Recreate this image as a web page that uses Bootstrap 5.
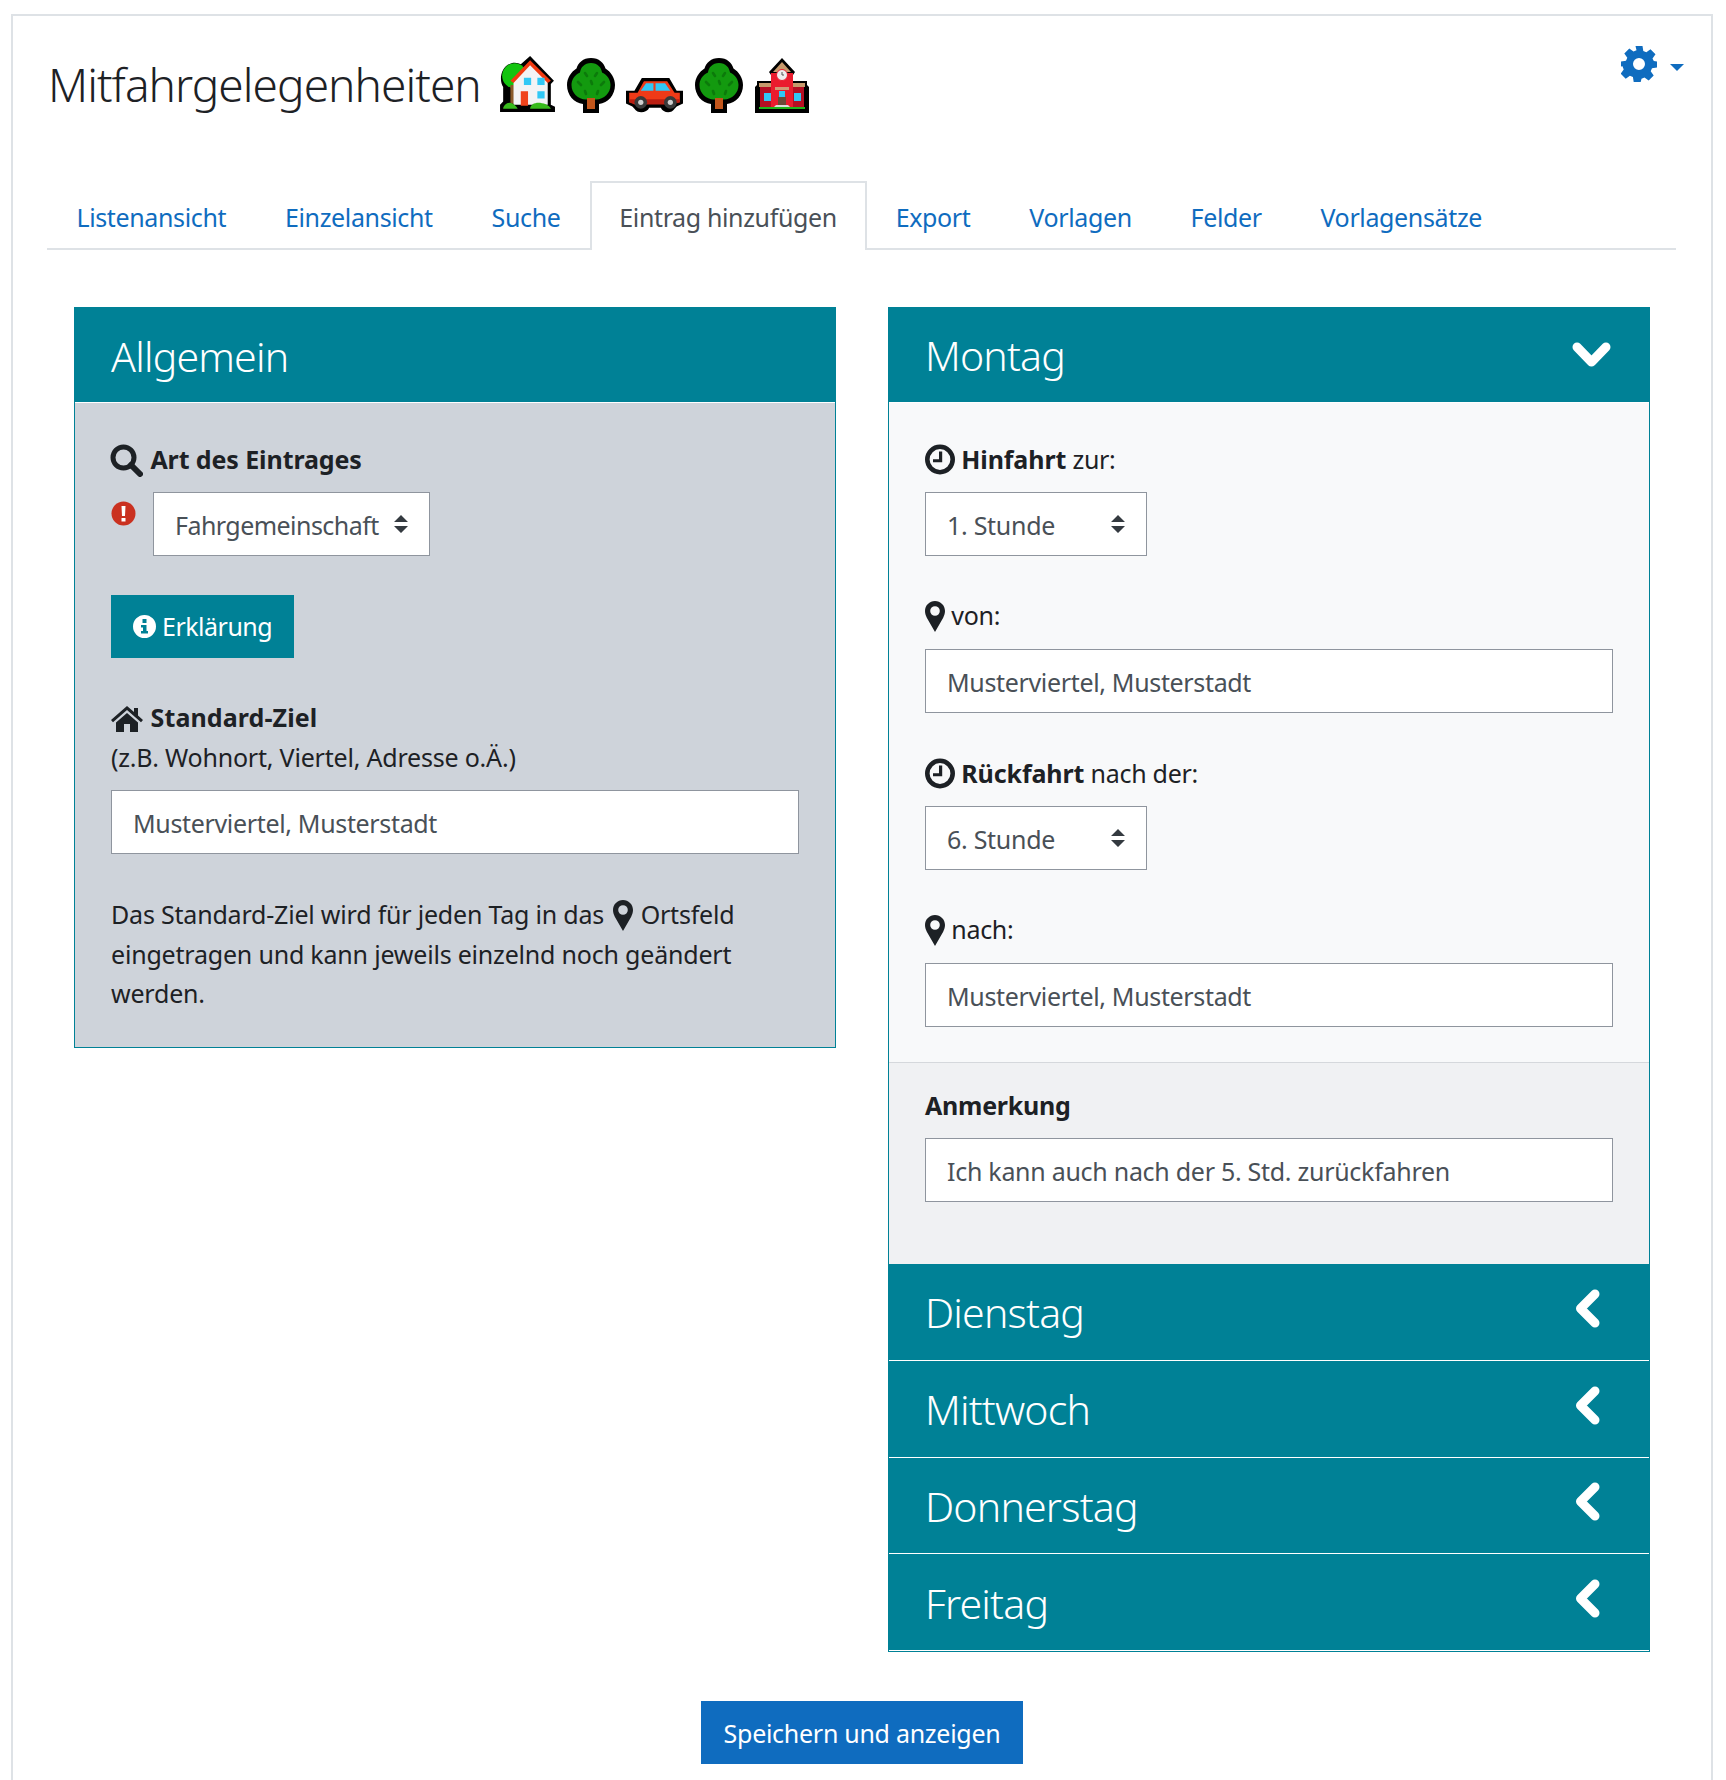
<!DOCTYPE html>
<html lang="de">
<head>
<meta charset="utf-8">
<title>Mitfahrgelegenheiten</title>
<link href="https://cdn.jsdelivr.net/npm/bootstrap@5.3.0/dist/css/bootstrap.min.css" rel="stylesheet">
<style>
:root{--teal:#008196;--ink:#1d2125;--blue:#0f6cbf}
body{font-family:"Noto Sans","Open Sans","Liberation Sans",sans-serif;font-size:25px;letter-spacing:-.28px;line-height:39.4px;color:var(--ink);background:#fff}
b,.fw-bold{letter-spacing:-.1px}
.page-frame{margin:14px 13px 0 11px;border:solid #dee2e6;border-width:2px 2px 0 2px;padding:0 35px 16px 35px;position:relative}
.title-row{height:165px;padding-top:38px}
.page-title{font-weight:300;font-size:46px;line-height:60px;margin:0;letter-spacing:-.95px;color:var(--ink)}
.emoji-row{gap:12px;align-items:flex-end;margin-left:18px;height:59px}
.car-art{margin-left:-1px}
.gear-link{position:absolute;top:30px;right:27px;color:var(--blue);text-decoration:none;gap:13px}
.gear-caret{width:0;height:0;border:7px solid transparent;border-top-color:var(--blue);border-bottom:0;margin-top:6px}
.tabs-bar{--bs-nav-tabs-border-color:#dee2e6;--bs-nav-tabs-border-radius:0;--bs-nav-tabs-border-width:2px;height:69px;margin-left:-1px}
.tabs-bar .nav-link{color:var(--blue);padding:14px 28.4px 10px;height:69px;line-height:42px;border-width:1px 1px 0 1px;margin:0;letter-spacing:-.36px}
.tabs-bar .nav-link.active{color:#495057;border:solid #dee2e6;border-width:2px 2px 0 2px;background:#fff;height:69px;margin:0 -1px -2px 0;padding:13px 28.4px 10px 27.4px}
.forms-row{--bs-gutter-x:52px;margin:57px 0 0}
.day-card{--bs-card-border-color:var(--teal);--bs-card-border-radius:0;--bs-card-inner-border-radius:0;--bs-card-border-width:1px;--bs-card-bg:transparent}
.day-head{background:var(--teal);color:#fff;padding:0 32px 0 36px;height:96.75px;border-bottom:1px solid #fff;border-radius:0!important}
.day-head.lead-head{height:95px}
.head-text{font-weight:300;font-size:41px;line-height:96px;margin:0;letter-spacing:-.8px}
.day-head:not(.lead-head) .head-text{padding-top:1px}
.body-grey{background:#ced3da;padding:37px 36px 34px}
.body-light{background:#f8f9fa;padding:37px 36px 35px;border-bottom:1px solid #d5d8dc}
.body-note{background:#f0f1f3;padding:23px 36px 62px}
.field-gap{margin-bottom:40px}
.field-gap-wide{margin-bottom:41px}
.label-text{display:block;margin-bottom:13px;line-height:39.4px;color:var(--ink)}
.label-tight{margin-bottom:0;letter-spacing:.1px}
.note-label{letter-spacing:-.25px}
.soft-track{letter-spacing:-.2px}
.ico{display:inline-block;vertical-align:-5px;fill:currentColor}
.ico-search{vertical-align:-8px;margin:0 1px 0 -1px}
.ico-home{margin-right:1px}
.ico-inline{vertical-align:-7px;margin:0 1px 0 3px}
.form-control.wide-field,.form-select.pick-field{border-radius:0;border:1px solid #8f959e;color:#495057;font-size:25px;letter-spacing:-.28px;height:64px;padding:1px 21px 0;line-height:60px}
.form-control.wide-field{padding-top:2px}
.form-control.addr-field{letter-spacing:-.34px}
.form-select.pick-field{background-image:url("data:image/svg+xml,%3Csvg xmlns='http://www.w3.org/2000/svg' viewBox='0 0 14 18'%3E%3Cpath d='M7 0l7 7H0zM7 18l7-7H0z' fill='%23343a40'/%3E%3C/svg%3E");background-size:14px 18px;background-position:right 21px center;padding-right:40px}
.form-select.pick-wide{width:277px;letter-spacing:-.55px}
.pick-small{width:222px}
.alert-mark{width:42px;padding-top:9px}
.button-slot{margin:39px 0 40px}
.info-btn{background:var(--teal);color:#fff;border:0;border-radius:0;font-size:25px;letter-spacing:-.5px;height:63px;padding:0 22px;line-height:63px;display:inline-flex;align-items:center;gap:6px}
.save-btn{background:var(--blue);color:#fff;border:0;border-radius:0;font-size:25px;letter-spacing:-.28px;height:63px;padding:1px 22.6px 0;line-height:62px}
.save-row{margin-top:49px}
.arrow-side{margin:0 17px 7px 0}
.arrow-down{margin-right:6px}
p.help-text{margin:41px 0 0}
</style>
</head>
<body>
<svg width="0" height="0" class="position-absolute">
<defs>
<symbol id="i-pin" viewBox="0 0 20 31"><path fill-rule="evenodd" d="M10 0C4.500 0 0 4.400 0 10c0 2.500.8 4.500 1.800 6.800L10 31l8.200-14.200C19.200 14.500 20 12.500 20 10 20 4.400 15.500 0 10 0zm0 5.200a4.800 4.800 0 1 1 0 9.600 4.800 4.800 0 0 1 0-9.600z"/></symbol>
<symbol id="i-clock" viewBox="0 0 30 31"><circle cx="15" cy="15.500" r="12.700" fill="none" stroke="currentColor" stroke-width="4.600"/><path d="M14 7.500h3.200V18.200H8v-3h6z"/></symbol>
<symbol id="i-left" viewBox="0 0 26 39"><path d="M21 5L6.500 19.500 21 34" fill="none" stroke="#fff" stroke-width="9" stroke-linecap="round" stroke-linejoin="round"/></symbol>
<symbol id="i-tree" viewBox="0 0 48 55"><path d="M24 0c8 0 13 5 14.500 10.500C44 14 48 20 48 27c0 10-7 18-16 19v9H16v-9C7 45 0 37 0 27c0-7 4-13 9.500-16.500C11 5 16 0 24 0z" fill="#000"/><path d="M24 5c6.500 0 10.500 4.500 11 9.500 5.500 2.500 8.500 7.500 8.500 12.500 0 8-6.500 14.500-14.500 14.500-2 0-3.500-.4-5-1-1.500.6-3 1-5 1-8 0-14.500-6.500-14.500-14.500 0-5 3-10 8.500-12.500C13.500 9.500 17.500 5 24 5z" fill="#139a0f"/><rect x="20" y="40" width="8" height="11" fill="#c2551b"/><path d="M18 15l2 3M30 15l-2 3M11 24l3 3M24 23l1 3M37 24l-3 3M18 33l1 3M31 33l-1 3" stroke="#0c7a0b" stroke-width="2.600" stroke-linecap="round"/></symbol>
</defs>
</svg>
<div class="page-frame">
  <div class="title-row d-flex align-items-start">
    <h1 class="page-title">Mitfahrgelegenheiten</h1>
    <div class="emoji-row d-flex">
      <svg width="56" height="57" viewBox="0 0 54 55"><path d="M1 54v-7l3-3V30C0 24 1 10 12 7c4-1 7 0 9 1L30 0l23 24-3 3v20l4 2v5z" fill="#000"/><circle cx="15" cy="19" r="12" fill="#13c40f"/><rect x="11" y="28" width="5" height="18" fill="#8a5a2b"/><path d="M30 7L14 23v24h33V23z" fill="#f3f3f5"/><path d="M30 4L11 24l3 2L30 9l17 17 3-2z" fill="#f23a10"/><rect x="24" y="21" width="7" height="7" fill="#31c8f6"/><rect x="37" y="21" width="7" height="7" fill="#31c8f6"/><rect x="37" y="34" width="7" height="7" fill="#31c8f6"/><rect x="21" y="34" width="7" height="14" fill="#f0431c"/><path d="M4 51c0-3 3-6 6-6s7 3 8 6zM30 51c0-4 4-6 8-6s11 2 12 6z" fill="#38bb1c"/></svg>
      <svg width="48" height="55"><use href="#i-tree"/></svg>
      <svg class="car-art" width="57" height="35" viewBox="0 0 54 33"><path d="M0 12h8L15 0h26l7 12h6v12l-6 3-2 2c-3 5-11 4-13-1H22c-2 5-11 6-14 1l-2-2-6-3z" fill="#000"/><path d="M3 14h8l6-11h22l7 11h5v9l-7 1H8l-5-1z" fill="#ef3a18"/><path d="M3 20h48v3l-7 2H8l-5-2z" fill="#bb1f12"/><path d="M14 12l5-7h7v7zM28 5h9l5 7H28z" fill="#31c8f6"/><circle cx="14" cy="23" r="6" fill="#3a3a3a"/><circle cx="14" cy="23" r="2.500" fill="#cfcfcf"/><circle cx="42" cy="23" r="6" fill="#3a3a3a"/><circle cx="42" cy="23" r="2.500" fill="#cfcfcf"/></svg>
      <svg width="48" height="55"><use href="#i-tree"/></svg>
      <svg width="54" height="55" viewBox="0 0 54 55"><path d="M27 0l13 14-2 3v6h14v4l2 2v26H0V29l2-2v-4h14v-6l-2-3z" fill="#000"/><path d="M5 29h44v21H5z" fill="#b50f23"/><path d="M4 25h46v4H4z" fill="#c79a6c"/><path d="M16 15h22v35H16z" fill="#ea1c2e"/><path d="M27 4l9 10H18z" fill="#c79a6c"/><circle cx="27" cy="17" r="5.500" fill="#eee" stroke="#ea1c2e" stroke-width="1"/><path d="M27 14v3h2" stroke="#555" fill="none"/><rect x="9" y="35" width="7" height="8" fill="#31c8f6"/><rect x="39" y="35" width="7" height="8" fill="#31c8f6"/><rect x="24" y="33" width="6" height="6" fill="#31c8f6"/><path d="M20 29h14v3H20z" fill="#d29a76"/><rect x="23" y="39" width="8" height="9" fill="#6b4a38"/><path d="M18 50l3-3h12l3 3z" fill="#ddd"/><rect x="4" y="49" width="46" height="2" fill="#20b51c"/></svg>
    </div>
  </div>
  <a class="gear-link d-flex align-items-center" href="#" aria-label="Einstellungen">
    <svg width="36" height="36" viewBox="0 0 36 36"><path fill="#0f6cbf" fill-rule="evenodd" d="M14.500 0h7l.8 5 3 1.300 4.200-3 5 5-3 4.200L32.800 15l3.200.6v5.800l-5 .8-1.300 3 3 4.200-5 5-4.200-3-3 1.300-.8 3.300h-7l-.8-5-3-1.300-4.200 3-5-5 3-4.200-1.200-3.200L0 20.500v-5l5-.8 1.300-3-3-4.200 5-5 4.200 3 3-1.300zM18 12a6 6 0 1 0 0 12 6 6 0 0 0 0-12z"/></svg>
    <span class="gear-caret"></span>
  </a>
  <ul class="nav nav-tabs tabs-bar">
    <li class="nav-item"><a class="nav-link" href="#">Listenansicht</a></li>
    <li class="nav-item"><a class="nav-link" href="#">Einzelansicht</a></li>
    <li class="nav-item"><a class="nav-link" href="#">Suche</a></li>
    <li class="nav-item"><a class="nav-link active" href="#">Eintrag hinzufügen</a></li>
    <li class="nav-item"><a class="nav-link" href="#">Export</a></li>
    <li class="nav-item"><a class="nav-link" href="#">Vorlagen</a></li>
    <li class="nav-item"><a class="nav-link" href="#">Felder</a></li>
    <li class="nav-item"><a class="nav-link" href="#">Vorlagensätze</a></li>
  </ul>
  <div class="row forms-row">
    <div class="col-6">
      <div class="card day-card">
        <div class="card-header day-head lead-head"><h3 class="head-text">Allgemein</h3></div>
        <div class="body-grey">
          <label class="label-text fw-bold"><svg class="ico ico-search" width="33" height="33" viewBox="0 0 33 33"><circle cx="13.500" cy="13.500" r="10.500" fill="none" stroke="currentColor" stroke-width="5"/><path d="M21 21l9 9" stroke="currentColor" stroke-width="6" stroke-linecap="round"/></svg> Art des Eintrages</label>
          <div class="d-flex">
            <div class="alert-mark"><svg width="25" height="25" viewBox="0 0 25 25" class="d-block"><circle cx="12.500" cy="12.500" r="12" fill="#ca3120"/><path d="M10.500 5h4l-.5 10h-3zM10.500 17h4v3.500h-4z" fill="#fff"/></svg></div>
            <select class="form-select pick-field pick-wide"><option>Fahrgemeinschaft</option></select>
          </div>
          <div class="button-slot d-flex">
            <button type="button" class="btn info-btn"><svg width="23" height="23" viewBox="0 0 23 23"><path fill="#fff" fill-rule="evenodd" d="M11.500 0a11.500 11.500 0 1 1 0 23 11.500 11.500 0 0 1 0-23zM9.500 4v4h4V4zM8 10v2.500h2V16H8v2.500h7V16h-1.500v-6z"/></svg>Erklärung</button>
          </div>
          <label class="label-text fw-bold label-tight"><svg class="ico ico-home" width="32" height="26" viewBox="0 0 32 26"><path d="M16 0L0 14l2 2.300L16 4l14 12.300 2-2.300-5-4.500V2h-4v4zM5 16.500V26h8v-8h6v8h8v-9.500L16 7z"/></svg> Standard-Ziel</label>
          <div class="label-text soft-track">(z.B. Wohnort, Viertel, Adresse o.Ä.)</div>
          <input class="form-control wide-field addr-field" value="Musterviertel, Musterstadt">
          <p class="help-text soft-track">Das Standard-Ziel wird für jeden Tag in das <svg class="ico ico-inline" width="20" height="31"><use href="#i-pin"/></svg> Ortsfeld eingetragen und kann jeweils einzelnd noch geändert werden.</p>
        </div>
      </div>
    </div>
    <div class="col-6">
      <div class="card day-card">
        <div class="card-header day-head lead-head d-flex justify-content-between align-items-center"><h3 class="head-text">Montag</h3><svg width="39" height="26" viewBox="0 0 39 26" class="arrow-down"><path d="M5 5l14.500 15L34 5" fill="none" stroke="#fff" stroke-width="9" stroke-linecap="round" stroke-linejoin="round"/></svg></div>
        <div class="body-light">
          <div class="field-gap"><label class="label-text"><svg class="ico" width="30" height="31" style="vertical-align:-6px"><use href="#i-clock"/></svg> <b>Hinfahrt</b> zur:</label>
            <select class="form-select pick-field pick-small"><option>1. Stunde</option></select></div>
          <div class="field-gap-wide"><label class="label-text"><svg class="ico" width="20" height="31" style="vertical-align:-7px"><use href="#i-pin"/></svg> von:</label>
            <input class="form-control wide-field addr-field" value="Musterviertel, Musterstadt"></div>
          <div class="field-gap"><label class="label-text"><svg class="ico" width="30" height="31" style="vertical-align:-6px"><use href="#i-clock"/></svg> <b>Rückfahrt</b> nach der:</label>
            <select class="form-select pick-field pick-small"><option>6. Stunde</option></select></div>
          <div><label class="label-text"><svg class="ico" width="20" height="31" style="vertical-align:-7px"><use href="#i-pin"/></svg> nach:</label>
            <input class="form-control wide-field addr-field" value="Musterviertel, Musterstadt"></div>
        </div>
        <div class="body-note">
          <label class="label-text fw-bold note-label">Anmerkung</label>
          <input class="form-control wide-field" value="Ich kann auch nach der 5. Std. zurückfahren">
        </div>
        <div class="card-header day-head d-flex justify-content-between align-items-center"><h3 class="head-text">Dienstag</h3><svg width="26" height="39" class="arrow-side"><use href="#i-left"/></svg></div>
        <div class="card-header day-head d-flex justify-content-between align-items-center"><h3 class="head-text">Mittwoch</h3><svg width="26" height="39" class="arrow-side"><use href="#i-left"/></svg></div>
        <div class="card-header day-head d-flex justify-content-between align-items-center"><h3 class="head-text">Donnerstag</h3><svg width="26" height="39" class="arrow-side"><use href="#i-left"/></svg></div>
        <div class="card-header day-head d-flex justify-content-between align-items-center"><h3 class="head-text">Freitag</h3><svg width="26" height="39" class="arrow-side"><use href="#i-left"/></svg></div>
      </div>
    </div>
  </div>
  <div class="save-row text-center"><button type="button" class="btn save-btn">Speichern und anzeigen</button></div>
</div>
<script src="https://cdn.jsdelivr.net/npm/bootstrap@5.3.0/dist/js/bootstrap.bundle.min.js"></script>
</body>
</html>
